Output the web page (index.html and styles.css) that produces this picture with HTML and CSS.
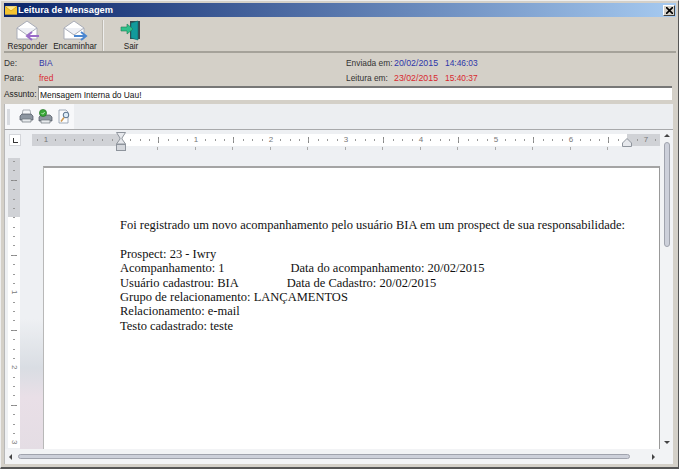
FILE: index.html
```
<!DOCTYPE html>
<html lang="pt-BR">
<head>
  <meta charset="UTF-8" />
  <meta name="viewport" content="width=device-width, initial-scale=1.0" />
  <title>Leitura de Mensagem</title>
  <link rel="stylesheet" href="styles.css">
</head>
<body>
  <div class="window">
    <div class="titlebar">
      <svg class="title-icon" width="12" height="9" viewBox="0 0 13 9">
        <rect width="13" height="9" fill="#f4c430"/>
        <path d="M0 0l6.5 5L13 0" fill="#ffe88a" stroke="#d9aa20" stroke-width="1"/>
      </svg>
      <span class="title-text">Leitura de Mensagem</span>
      <button class="close-btn">
        <svg width="7" height="7" viewBox="0 0 7 7"><path d="M0 0l7 7M7 0L0 7" stroke="#000" stroke-width="1.6"/></svg>
      </button>
    </div>

    <div class="toolbar">
      <div class="tool tool-reply">
        <svg width="26" height="22" viewBox="0 0 26 22">
          <path d="M2 8L12 1l10 7v11H2z" fill="#fff" stroke="#a9adb8"/>
          <path d="M2 8l10 7 10-7" fill="#eef0f5" stroke="#a9adb8"/>
          <path d="M24 16H13M17 12l-5 4 5 4" fill="none" stroke="#9a6cc8" stroke-width="2"/>
        </svg>
        <span>Responder</span>
      </div>
      <div class="tool tool-forward">
        <svg width="26" height="22" viewBox="0 0 26 22">
          <path d="M2 8L12 1l10 7v11H2z" fill="#fff" stroke="#a9adb8"/>
          <path d="M2 8l10 7 10-7" fill="#eef0f5" stroke="#a9adb8"/>
          <path d="M12 16h11M19 12l5 4-5 4" fill="none" stroke="#4a86d0" stroke-width="2"/>
        </svg>
        <span>Encaminhar</span>
      </div>
      <div class="tool-sep"></div>
      <div class="tool tool-exit">
        <svg width="22" height="22" viewBox="0 0 22 22">
          <path d="M10 1h10v18H10z" fill="#3c484f"/>
          <path d="M11 3l7-2v19l-7-2z" fill="#129a9c" stroke="#0d6a6a" stroke-width=".6"/>
          <path d="M1 7h6V4l6 5-6 5v-3H1z" fill="#2fc08a" stroke="#1b7d55" stroke-width=".6"/>
        </svg>
        <span>Sair</span>
      </div>
    </div>

    <div class="info">
      <span class="info-label">De:</span>
      <span class="info-name sender">BIA</span>
      <span class="info-label">Enviada em:</span>
      <span class="info-date sender">20/02/2015</span>
      <span class="info-time sender">14:46:03</span>
      <span class="info-label">Para:</span>
      <span class="info-name reader">fred</span>
      <span class="info-label">Leitura em:</span>
      <span class="info-date reader">23/02/2015</span>
      <span class="info-time reader">15:40:37</span>
    </div>

    <div class="subject">
      <label for="assunto">Assunto:</label>
      <input id="assunto" type="text" value="Mensagem Interna do Uau!" />
    </div>

    <div class="doc-toolbar">
      <div class="doc-tools">
        <span class="grip"></span>
        <svg width="15" height="15" viewBox="0 0 15 15">
          <path d="M4 1h7l1 5H3z" fill="#f4f6f8" stroke="#8a9098" stroke-width=".7"/>
          <path d="M1 7l2-2h9l2 2v4H1z" fill="#8d96a0" stroke="#4d555e" stroke-width=".7"/>
          <path d="M3 10h9v3H3z" fill="#e8ebee" stroke="#6a727a" stroke-width=".7"/>
        </svg>
        <svg width="15" height="15" viewBox="0 0 15 15">
          <path d="M1 8l2-2h9l2 2v4H1z" fill="#8d96a0" stroke="#4d555e" stroke-width=".7"/>
          <path d="M3 11h9v3H3z" fill="#e8ebee" stroke="#6a727a" stroke-width=".7"/>
          <circle cx="5" cy="4" r="3.6" fill="#3aa83a" stroke="#1f6d1f" stroke-width=".6"/>
          <path d="M3.5 4l1.2 1.2L6.7 3" fill="none" stroke="#dff5df" stroke-width=".8"/>
        </svg>
        <svg width="15" height="15" viewBox="0 0 15 15">
          <path d="M2 1h7l2 2v11H2z" fill="#fbfcfe" stroke="#8a97a8" stroke-width=".8"/>
          <circle cx="9" cy="6" r="2.8" fill="#dcebf7" stroke="#56708c"/>
          <path d="M7 8.5l-3 4" stroke="#d09a50" stroke-width="1.5"/>
        </svg>
      </div>
    </div>

    <div class="editor">
      <div class="ruler-row">
        <span class="tab-stop"></span>
        <div class="h-ruler">
          <div class="h-nums">
            <span class="on-gray">1</span><span class="no-num"></span><span>1</span><span>2</span><span>3</span><span>4</span><span>5</span><span>6</span><span class="on-gray">7</span>
          </div>
          <svg class="margin-left-mark" width="10" height="19" viewBox="0 0 10 19">
            <path d="M.5.5h9L6 6v1l3.500 5h-9L4 7V6z" fill="#e6e8ec" stroke="#8e949c"/>
            <rect x=".5" y="12.500" width="9" height="6" fill="#d4d7dc" stroke="#8e949c"/>
          </svg>
          <svg class="margin-right-mark" width="10" height="9" viewBox="0 0 10 9">
            <path d="M.5 8.500V5L5 .5 9.500 5v3.500z" fill="#e6e8ec" stroke="#8e949c"/>
          </svg>
        </div>
      </div>

      <div class="work-row">
        <div class="v-ruler">
          <div class="v-nums"><span>1</span><span>2</span><span>3</span></div>
        </div>
        <div class="gutter"></div>
        <div class="page">
          <div class="page-text">
            <p>Foi registrado um novo acompanhamento pelo usuário BIA em um prospect de sua responsabilidade:</p>
            <p class="gap">Prospect: 23 - Iwry</p>
            <p>Acompanhamento: 1<span class="tab-first">Data do acompanhamento: 20/02/2015</span></p>
            <p>Usuário cadastrou: BIA<span class="tab-second">Data de Cadastro: 20/02/2015</span></p>
            <p>Grupo de relacionamento: LANÇAMENTOS</p>
            <p>Relacionamento: e-mail</p>
            <p>Testo cadastrado: teste</p>
          </div>
        </div>
      </div>

      <div class="h-scroll">
        <span class="arrow arrow-left"></span>
        <span class="h-thumb"></span>
        <span class="arrow arrow-right"></span>
      </div>

      <div class="v-scroll">
        <span class="arrow arrow-up"></span>
        <span class="v-thumb"></span>
        <span class="arrow arrow-down"></span>
      </div>
    </div>
  </div>
</body>
</html>
```

FILE: styles.css
```
* {
  box-sizing: border-box;
  margin: 0;
  padding: 0;
}

body {
  width: 679px;
  height: 469px;
  overflow: hidden;
  background: #d4d0c8;
  font-family: 'Liberation Sans', Arial, sans-serif;
  font-size: 8.4px;
  color: #222;
}

.window {
  display: flex;
  flex-direction: column;
  width: 679px;
  height: 469px;
  padding: 3px 2px 3px 3px;
  border-right: 1px solid #555;
  border-bottom: 2px solid #555;
  border-top: 1px solid #eee;
  border-left: 1px solid #eee;
}

/* title bar */
.titlebar {
  display: flex;
  align-items: center;
  flex: none;
  height: 14px;
  margin-top: -1px;
  padding: 0 1px;
  color: white;
  background: linear-gradient(to right, #0a246a, #a6caf0);
}

.title-icon {
  margin-right: 1px;
}

.title-text {
  flex: 1;
  font-size: 9.3px;
  font-weight: bold;
}

.close-btn {
  display: flex;
  align-items: center;
  justify-content: center;
  width: 12px;
  height: 11px;
  background: #d4d0c8;
  border: 1px solid;
  border-color: #fff #404040 #404040 #fff;
}

/* main toolbar */
.toolbar {
  display: flex;
  flex: none;
  align-items: flex-start;
  height: 36px;
  padding-top: 3px;
  font-size: 8.2px;
  border-bottom: 2px solid #a5a29a;
}

.tool {
  display: flex;
  flex-direction: column;
  align-items: center;
  justify-content: space-between;
  height: 31px;
}

.tool-reply {
  width: 47px;
}

.tool-forward {
  width: 48px;
}

.tool-exit {
  width: 50px;
  margin-left: 2px;
}

.tool-sep {
  width: 2px;
  height: 31px;
  margin-left: 3px;
  background: #bdb9b0;
  border-right: 1px solid #eee;
}

/* message info */
.info {
  display: grid;
  flex: none;
  grid-template-columns: 35px 307px 48px 51px auto;
  grid-auto-rows: 14.5px;
  align-items: center;
  height: 33px;
  padding-top: 3px;
  color: #333;
}

.info-date {
  font-size: 8.8px;
}

.sender {
  color: #2e36a8;
}

.reader {
  color: #d8292f;
}

.subject {
  display: flex;
  flex: none;
  align-items: center;
  height: 14px;
}

.subject label {
  width: 34px;
  padding-top: 1px;
}

.subject input {
  width: 634px;
  height: 14px;
  padding: 1px 0 0 1px;
  font-family: inherit;
  font-size: 8.4px;
  color: #111;
  background: white;
  border: none;
  border-top: 2px solid #777;
  border-left: 1px solid #999;
  outline: none;
}

/* document toolbar */
.doc-toolbar {
  flex: none;
  height: 26px;
  margin: 4px 3px 0 0;
  background: #eceef1;
  border-bottom: 1px solid #a8a9ab;
  border-left: 1px solid #b8b8b8;
}

.doc-tools {
  display: flex;
  align-items: center;
  gap: 4px;
  width: 69px;
  height: 25px;
  padding-left: 2px;
  background: #f7f8fa;
}

.grip {
  width: 3px;
  height: 16px;
  margin-right: 5px;
  background: #d8dbe0;
}

/* editor area */
.editor {
  position: relative;
  display: flex;
  flex: 1;
  flex-direction: column;
  min-height: 0;
  margin-right: 3px;
  padding-right: 13px;
  background: #eef0f3;
  border-left: 1px solid #b8b8b8;
}

.ruler-row {
  display: flex;
  flex: none;
  height: 28px;
  padding: 4px 0 0 4px;
}

.tab-stop {
  position: relative;
  width: 12px;
  height: 12px;
  background: white;
  border: 1px solid #d4d6da;
}

.tab-stop::after {
  content: "";
  position: absolute;
  left: 3px;
  top: 3px;
  width: 4px;
  height: 4px;
  border-left: 1px solid #333;
  border-bottom: 1px solid #333;
}

.h-ruler {
  position: relative;
  width: 628px;
  height: 12px;
  margin-left: 11px;
  background:
    repeating-linear-gradient(90deg, transparent 0 4.6px, #999 4.6px 5.6px, transparent 5.6px 9.375px) 0 5px / 100% 2px no-repeat,
    repeating-linear-gradient(90deg, transparent 0 51.5px, #888 51.5px 52.5px, transparent 52.5px 75px) 0 3px / 100% 6px no-repeat,
    linear-gradient(to right, #d0d2d6 0 89px, white 89px 595px, #d0d2d6 595px);
}

/* small marks under the ruler */
.h-ruler::after {
  content: "";
  position: absolute;
  left: 89px;
  right: 33px;
  top: 13px;
  height: 3px;
  background: repeating-linear-gradient(90deg, transparent 0 36.5px, #aaa 36.5px 37.5px);
}

.h-nums {
  display: flex;
  width: 651px;
  height: 12px;
  margin-left: -23.5px;
  clip-path: inset(0 0 0 23.5px);
  color: #777;
  font-size: 8px;
  line-height: 12px;
  text-align: center;
}

/* the number hides the tick underneath it */
.h-nums span {
  flex: none;
  width: 75px;
  background: linear-gradient(90deg, transparent 33px, white 33px 42px, transparent 42px);
}

.h-nums .on-gray {
  background: linear-gradient(90deg, transparent 33px, #d0d2d6 33px 42px, transparent 42px);
}

.h-nums .no-num {
  background: none;
}

.margin-left-mark {
  position: absolute;
  left: 84px;
  top: -2px;
}

.margin-right-mark {
  position: absolute;
  left: 590px;
  top: 4px;
}

.work-row {
  display: flex;
  flex: 1;
  min-height: 0;
}

.v-ruler {
  flex: none;
  width: 12px;
  height: 290px;
  margin-left: 3px;
  background:
    repeating-linear-gradient(180deg, transparent 0 3px, #999 3px 4px, transparent 4px 9.375px) 5px 0 / 2px 100% no-repeat,
    repeating-linear-gradient(180deg, transparent 0 21.5px, #888 21.5px 22.5px, transparent 22.5px 75px) 3px 0 / 6px 100% no-repeat,
    linear-gradient(to bottom, #d0d2d6 0 59px, white 59px);
}

.v-nums {
  display: flex;
  flex-direction: column;
  padding-top: 96.5px;
  color: #777;
  font-size: 8px;
}

.v-nums span {
  display: flex;
  flex: none;
  align-items: center;
  justify-content: center;
  height: 75px;
  background: linear-gradient(180deg, transparent 33px, white 33px 42px, transparent 42px);
  writing-mode: vertical-rl;
}

.gutter {
  flex: none;
  width: 23px;
  height: 292px;
  background: linear-gradient(to bottom, #eef0f3 55%, #d9dde3 72%, #e9dfe7 82%, #e4dde4);
}

.page {
  flex: none;
  width: 617px;
  height: 284px;
  margin-top: 8px;
  padding: 50px 0 0 76px;
  background: white;
  border-top: 2px solid #a4a4a4;
  border-left: 1px solid #b8b8b8;
  border-right: 1px solid #999;
}

.page-text {
  width: 530px;
  font-family: 'Liberation Serif', 'Times New Roman', serif;
  font-size: 12.5px;
  line-height: 14.4px;
  color: #111;
}

.gap {
  margin-top: 14.4px;
}

.tab-first {
  margin-left: 66px;
}

.tab-second {
  margin-left: 48px;
}

.h-scroll {
  display: flex;
  flex: none;
  align-items: center;
  height: 15px;
  margin-top: -1px;
  padding-left: 4px;
  background: #f2f3f5;
}

.h-thumb {
  width: 612px;
  height: 5px;
  margin-left: 6px;
  background: #cdd0da;
  border: 1px solid #a0a3ad;
  border-radius: 3px;
}

.v-scroll {
  position: absolute;
  top: 0;
  right: 0;
  bottom: 0;
  display: flex;
  flex-direction: column;
  align-items: center;
  width: 13px;
  padding-top: 4px;
  background: #f2f3f5;
}

.v-thumb {
  width: 6px;
  height: 105px;
  margin-top: 5px;
  background: #cdd0da;
  border: 1px solid #a0a3ad;
  border-radius: 3px;
}

.arrow {
  flex: none;
  width: 0;
  height: 0;
  border: 3px solid transparent;
}

.arrow-left {
  border-right-color: #444;
  border-left-width: 0;
}

.arrow-right {
  margin-left: 22px;
  border-left-color: #444;
  border-right-width: 0;
}

.arrow-up {
  border-bottom-color: #444;
  border-top-width: 0;
}

.arrow-down {
  margin-top: 194px;
  border-top-color: #444;
  border-bottom-width: 0;
}
```
